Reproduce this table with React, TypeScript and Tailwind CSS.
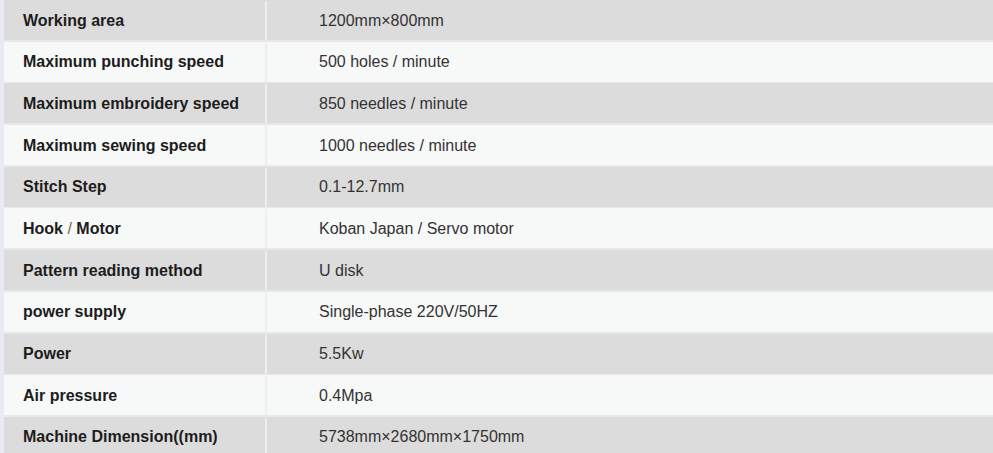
const specs = [
  ["Working area", "1200mm×800mm"],
  ["Maximum punching speed", "500 holes / minute"],
  ["Maximum embroidery speed", "850 needles / minute"],
  ["Maximum sewing speed", "1000 needles / minute"],
  ["Stitch Step", "0.1-12.7mm"],
  ["Hook / Motor", "Koban Japan / Servo motor"],
  ["Pattern reading method", "U disk"],
  ["power supply", "Single-phase 220V/50HZ"],
  ["Power", "5.5Kw"],
  ["Air pressure", "0.4Mpa"],
  ["Machine Dimension((mm)", "5738mm×2680mm×1750mm"],
];

const Label = ({ text }: { text: string }) => {
  // the slash in "Hook / Motor" is lighter than the words round it
  if (!text.includes(" / ")) return <>{text}</>;
  const [a, b] = text.split(" / ");
  return (
    <span className="whitespace-pre">
      {a + " "}
      <span className="font-normal text-[#666]">/</span>
      {" " + b}
    </span>
  );
};

export default function App() {
  return (
    <div className="h-[453px] w-[993px] overflow-hidden bg-[#e8ebf1] pl-[4px] font-['Liberation_Sans',Arial,sans-serif]">
      <div className="flex flex-col gap-[1.7px] bg-[#e6e8eb]">
        {specs.map(([label, value], i) => (
          <div
            key={label}
            className={`grid h-[40px] shrink-0 grid-cols-[261px_1fr] gap-[2px] pt-[1px] text-[16px] ${
              i % 2 === 0 ? "bg-[#dcdcdc]" : "bg-[#f7f8f8]"
            }`}
          >
            <div className="flex items-center pl-[19px] font-bold text-[#1c1c1c]">
              <Label text={label} />
            </div>
            <div className="flex items-center pl-[52px] text-[#333] shadow-[-2px_0_0_#eceef0]">
              {value}
            </div>
          </div>
        ))}
      </div>
    </div>
  );
}
